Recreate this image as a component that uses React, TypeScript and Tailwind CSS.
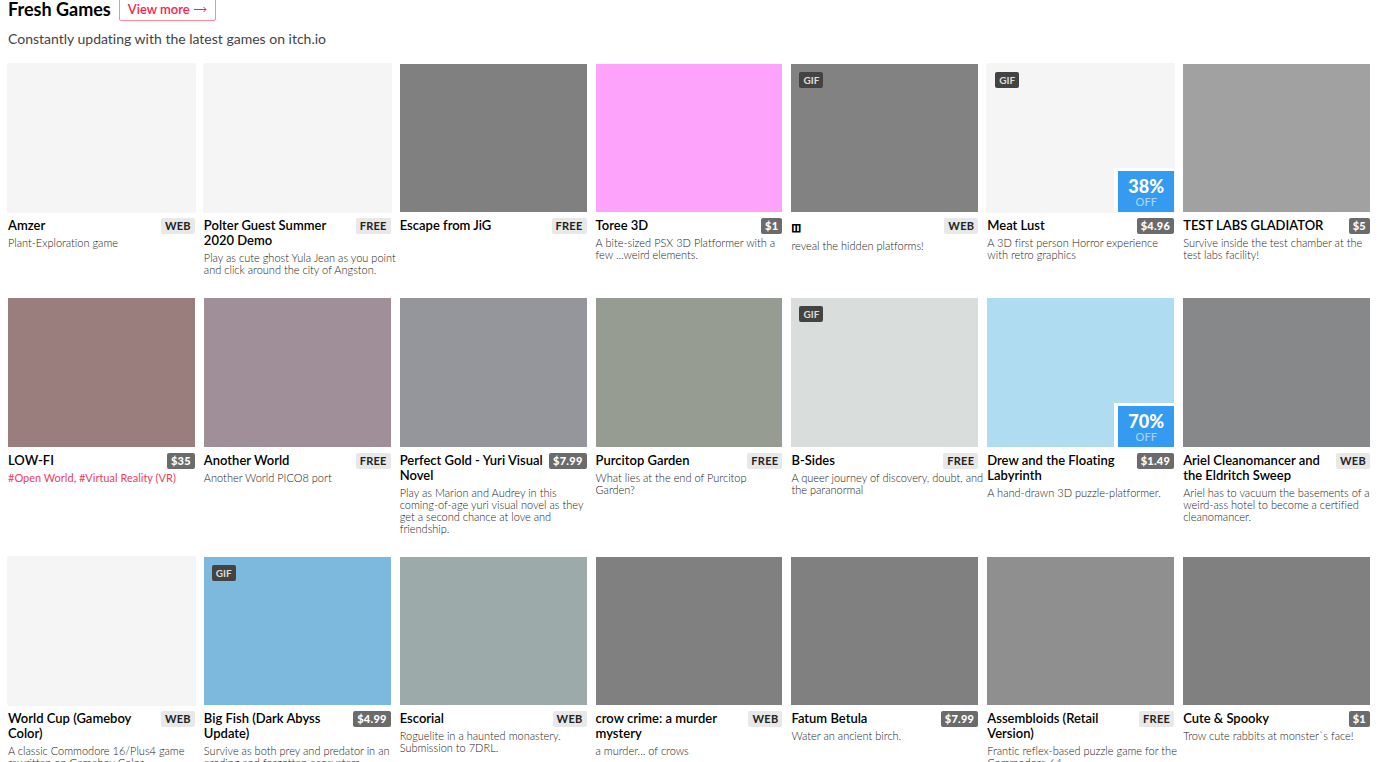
type Game = {
  title: string;
  glyph?: boolean;
  text?: string;
  tags?: string[];
  price: string;
  cover: string;
  gif?: boolean;
  sale?: string;
};

const PALE = "bg-[#f5f5f5] outline outline-1 outline-[#f5f5f5] rounded-[1px]";

const games: Game[] = [
  { title: "Amzer", text: "Plant-Exploration game", price: "WEB", cover: PALE },
  { title: "Polter Guest Summer 2020 Demo", text: "Play as cute ghost Yula Jean as you point and click around the city of Angston.", price: "FREE", cover: PALE },
  { title: "Escape from JiG", price: "FREE", cover: "bg-[#808080]" },
  { title: "Toree 3D", text: "A bite-sized PSX 3D Platformer with a few ...weird elements.", price: "$1", cover: "bg-[#fea3fb]" },
  { title: "◫", glyph: true, text: "reveal the hidden platforms!", price: "WEB", cover: "bg-[#828282]", gif: true },
  { title: "Meat Lust", text: "A 3D first person Horror experience with retro graphics", price: "$4.96", cover: PALE, gif: true, sale: "38%" },
  { title: "TEST LABS GLADIATOR", text: "Survive inside the test chamber at the test labs facility!", price: "$5", cover: "bg-[#a1a1a1]" },
  { title: "LOW-FI", tags: ["#Open World", "#Virtual Reality (VR)"], price: "$35", cover: "bg-[#9a7d7d]" },
  { title: "Another World", text: "Another World PICO8 port", price: "FREE", cover: "bg-[#a08f99]" },
  { title: "Perfect Gold - Yuri Visual Novel", text: "Play as Marion and Audrey in this coming-of-age yuri visual novel as they get a second chance at love and friendship.", price: "$7.99", cover: "bg-[#95969c]" },
  { title: "Purcitop Garden", text: "What lies at the end of Purcitop Garden?", price: "FREE", cover: "bg-[#969c91]" },
  { title: "B-Sides", text: "A queer journey of discovery, doubt, and the paranormal", price: "FREE", cover: "bg-[#d9dddc]", gif: true },
  { title: "Drew and the Floating Labyrinth", text: "A hand-drawn 3D puzzle-platformer.", price: "$1.49", cover: "bg-[#afdcf0]", sale: "70%" },
  { title: "Ariel Cleanomancer and the Eldritch Sweep", text: "Ariel has to vacuum the basements of a weird-ass hotel to become a certified cleanomancer.", price: "WEB", cover: "bg-[#87888a]" },
  { title: "World Cup (Gameboy Color)", text: "A classic Commodore 16/Plus4 game rewritten on Gameboy Color", price: "WEB", cover: PALE },
  { title: "Big Fish (Dark Abyss Update)", text: "Survive as both prey and predator in an eroding and forgotten ecosystem", price: "$4.99", cover: "bg-[#7db8dd]", gif: true },
  { title: "Escorial", text: "Roguelite in a haunted monastery. Submission to 7DRL.", price: "WEB", cover: "bg-[#9caaaa]" },
  { title: "crow crime: a murder mystery", text: "a murder... of crows", price: "WEB", cover: "bg-[#808080]" },
  { title: "Fatum Betula", text: "Water an ancient birch.", price: "$7.99", cover: "bg-[#808080]" },
  { title: "Assembloids (Retail Version)", text: "Frantic reflex-based puzzle game for the Commodore 64.", price: "FREE", cover: "bg-[#8f8f8f]" },
  { title: "Cute & Spooky", text: "Trow cute rabbits at monster`s face!", price: "$1", cover: "bg-[#808080]" },
];

function PriceTag({ price }: { price: string }) {
  const paid = price.startsWith("$");
  return (
    <a
      href="#"
      className={
        paid
          ? "h-4 shrink-0 rounded-[2px] bg-[#6b6b6b] px-1 text-[11px] leading-4 font-black tracking-wide text-white"
          : "h-4 shrink-0 rounded-[2px] bg-[#e8e8e8] px-1 text-[11px] leading-4 font-bold tracking-wide text-[#222]"
      }
    >
      {price}
    </a>
  );
}

function GameCard({ game }: { game: Game }) {
  return (
    <article className="min-w-0">
      <a href="#" aria-label={game.title} className={`relative block aspect-[315/250] ${game.cover}`}>
        {game.gif && (
          <span className="absolute top-2 left-2 h-4 rounded-[2px] bg-[#434343] px-1 text-[10px] leading-4 font-bold text-[#dddddd]">
            GIF
          </span>
        )}
        {game.sale && (
          <span className="absolute right-0 bottom-0 flex flex-col items-center border-t-3 border-l-4 border-white bg-[#349bf0] px-2.5 pt-1.5 pb-1 text-white">
            <span className="text-[18px] leading-[19px] font-black">{game.sale}</span>
            <span className="text-[11px] leading-3 font-medium text-[#a9d5fa]">OFF</span>
          </span>
        )}
      </a>
      <div className="mt-1.5 flex items-start justify-between gap-0.5">
        <h3
          className={
            game.glyph
              ? "min-w-0 text-[10px] leading-[18px] font-bold text-black [-webkit-text-stroke:1px_black]"
              : "min-w-0 text-[13px] leading-[15px] font-semibold text-black"
          }
        >
          <a href="#">{game.title}</a>
        </h3>
        {/* the tag may be taller than a one-line title without moving the text below */}
        <div className="-mb-1 flex shrink-0">
          <PriceTag price={game.price} />
        </div>
      </div>
      {game.text && <p className="mt-1 -mr-1.5 text-[11px] leading-3 font-light text-[#222]">{game.text}</p>}
      {game.tags && (
        <p className="mt-1 -mr-1.5 text-[11px] leading-3 text-[#606060]">
          {game.tags.map((tag, i) => (
            <span key={tag}>
              {i > 0 && ", "}
              <a href="#" className="text-[#ee3e60]">{tag}</a>
            </span>
          ))}
        </p>
      )}
    </article>
  );
}

export default function App() {
  return (
    <div className="h-screen overflow-hidden bg-white pr-2.5 pl-2 font-['Lato','DejaVu_Sans',sans-serif] text-[#222] [font-variant-ligatures:none]">
      <header className="-mt-[3px] flex items-center gap-2">
        <h2 className="text-[18px] leading-6 font-bold text-black">Fresh Games</h2>
        <a href="#" className="flex h-6 items-center gap-1 rounded-[2px] border border-[#ff8a9c] px-2 text-[13px] leading-6 font-semibold text-[#fa2448]">
          View more
          <svg className="h-3 w-[13px]" viewBox="0 0 13 12" fill="none" stroke="currentColor" aria-hidden="true">
            <path d="M0 6.5H12M9.5 4L12 6.5L9.5 9" />
          </svg>
        </a>
      </header>
      <p className="mt-2 text-[14px] leading-5 text-[#434343]">Constantly updating with the latest games on itch.io</p>
      <main className="mt-[15px] grid grid-cols-7 gap-x-[9px] gap-y-[22px]">
        {games.map((game) => (
          <GameCard key={game.title} game={game} />
        ))}
      </main>
    </div>
  );
}
